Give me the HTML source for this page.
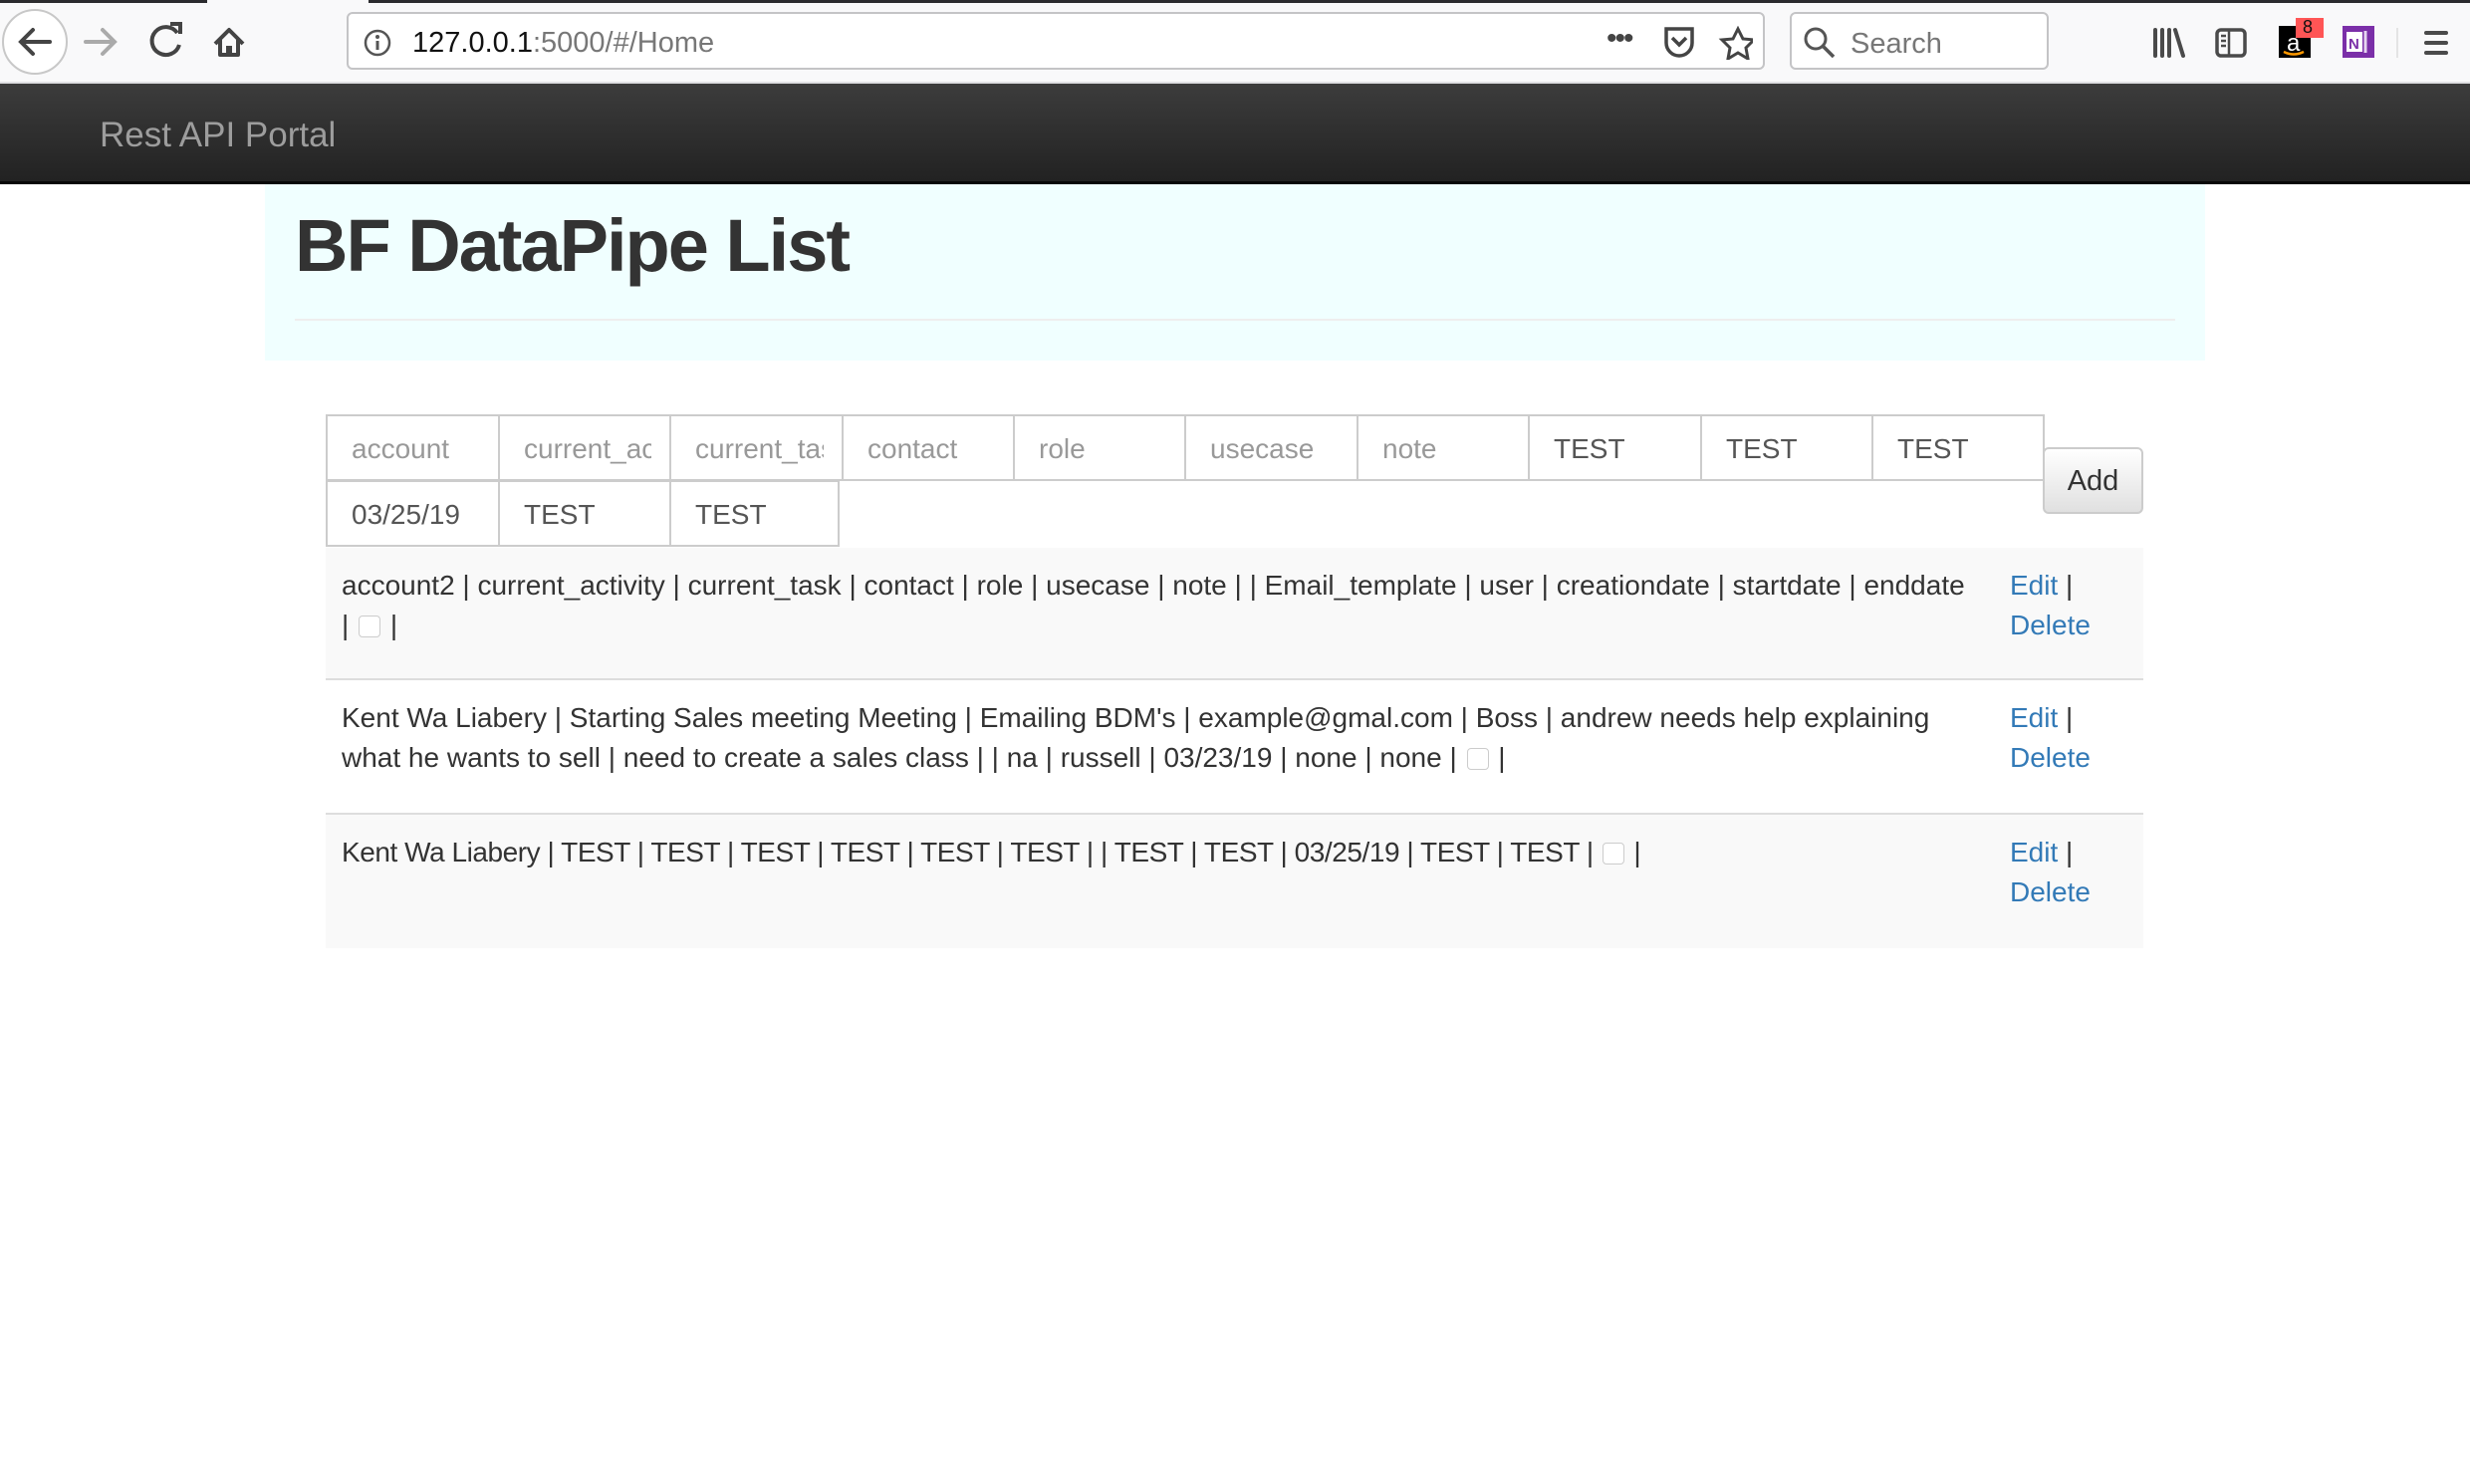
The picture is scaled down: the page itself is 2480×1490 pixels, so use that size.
<!DOCTYPE html>
<html><head><meta charset="utf-8"><style>
*{box-sizing:border-box;margin:0;padding:0}
body{width:2480px;height:1490px;background:#fff;font-family:"Liberation Sans",Arial,sans-serif;position:relative;overflow:hidden}
.abs{position:absolute}
#tb{left:0;top:0;width:2480px;height:84px;background:#f9f9fa;border-bottom:2px solid #e0e0e2}
#strip{left:0;top:0;width:2480px;height:3px;background:#2b2b2e}
#tab{left:208px;top:0;width:162px;height:3px;background:#f9f9fa}
#url{left:348px;top:12px;width:1424px;height:58px;border:2px solid #c4c4c6;border-radius:6px;background:#fff}
#srch{left:1797px;top:12px;width:260px;height:58px;border:2px solid #c4c4c6;border-radius:6px;background:#fff}
#nav{left:0;top:84px;width:2480px;height:101px;background:linear-gradient(#3c3c3c,#222);border-bottom:3px solid #080808}
#brand{left:100px;top:116px;font-size:35px;color:#9d9d9d}
#jumbo{left:266px;top:185px;width:1948px;height:177px;background:#f0ffff}
#title{left:296px;top:204px;font-size:74px;color:#333;font-weight:bold;letter-spacing:-2px}
#hr{left:296px;top:320px;width:1888px;height:2px;background:#eee}
.cell{position:absolute;height:67px;border:2px solid #ccc;background:#fff;font-size:28px;color:#999;padding-left:24px;padding-right:18px;line-height:66px;overflow:hidden;white-space:nowrap}
.cell span{display:block;overflow:hidden}
.cell.v{color:#555}
#add{left:2051px;top:449px;width:101px;height:67px;border:2px solid #ccc;border-radius:6px;background:linear-gradient(#fff,#e0e0e0);font-size:29px;color:#333;text-align:center;line-height:65px}
.row{position:absolute;left:327px;width:1825px;font-size:28px;color:#333;line-height:40px;padding:18px 16px 0 16px}
.row .t{width:1640px}
.row .a{position:absolute;left:1691px;top:18px;color:#337ab7}
.row .a span{color:#333}
.cb{display:inline-block;width:22px;height:22px;border:1px solid #ccc;border-radius:4px;vertical-align:-3px;background:#fff;margin:0 2px}
</style></head><body>
<div id="tb" class="abs"></div><div id="strip" class="abs"></div><div id="tab" class="abs"></div>
<svg class="abs" style="left:0;top:0" width="420" height="84">
<circle cx="35" cy="42" r="32" fill="#fff" stroke="#c8c8c8" stroke-width="2"/>
<path d="M50 42H22M33 30L21 42L33 54" stroke="#444" stroke-width="4" fill="none" stroke-linecap="round"/>
<path d="M86 42h28M103 30l12 12-12 12" stroke="#aaa" stroke-width="4" fill="none" stroke-linecap="round"/>
<path d="M178 33a14 14 0 1 0 2 12" stroke="#444" stroke-width="4" fill="none"/><path d="M171 24h10v10" stroke="#444" stroke-width="4" fill="none"/>
<path d="M216 44l14-14 14 14M221 40v15h18V40" stroke="#444" stroke-width="4" fill="none" stroke-linejoin="round"/><rect x="227" y="46" width="6" height="9" fill="#444"/>
</svg>
<div id="url" class="abs"></div>
<svg class="abs" style="left:364px;top:28px" width="30" height="30"><circle cx="15" cy="15" r="12" fill="none" stroke="#555" stroke-width="2.5"/><rect x="13.5" y="13" width="3" height="9" fill="#555"/><circle cx="15" cy="9" r="2" fill="#555"/></svg>
<div class="abs" style="left:414px;top:27px;font-size:29px;color:#111">127.0.0.1<span style="color:#777">:5000/#/Home</span></div>
<div class="abs" style="left:1613px;top:22px;font-size:30px;color:#444;letter-spacing:-2px">•••</div>
<svg class="abs" style="left:1670px;top:26px" width="90" height="34"><path d="M3 3h26v14a13 13 0 0 1-26 0z" fill="none" stroke="#444" stroke-width="3.5"/><path d="M9 12l7 7 7-7" fill="none" stroke="#444" stroke-width="3.5"/><path d="M75 3l5 10 11 1-8 8 2 11-10-6-10 6 2-11-8-8 11-1z" fill="none" stroke="#444" stroke-width="3"/></svg>
<div id="srch" class="abs"></div>
<svg class="abs" style="left:1810px;top:26px" width="34" height="34"><circle cx="13" cy="13" r="10" fill="none" stroke="#555" stroke-width="3"/><path d="M20 20l11 11" stroke="#555" stroke-width="3.5"/></svg>
<div class="abs" style="left:1858px;top:28px;font-size:29px;color:#777">Search</div>
<svg class="abs" style="left:2150px;top:18px" width="330" height="50">
<path d="M14 12v26M21 12v26M28 12v26M34 12l8 26" stroke="#4a4a4a" stroke-width="4" stroke-linecap="round"/>
<rect x="76" y="12" width="28" height="26" rx="4" fill="none" stroke="#4a4a4a" stroke-width="3.5"/><path d="M88 12v26M80 18h5M80 23h5M80 28h5" stroke="#4a4a4a" stroke-width="2.5"/>
<rect x="138" y="8" width="32" height="32" fill="#000"/><text x="146" y="33" font-size="24" fill="#fff" font-family="Liberation Sans">a</text><path d="M143 34q10 5 20 0" stroke="#f90" stroke-width="2.5" fill="none"/>
<rect x="155" y="-4" width="28" height="24" fill="#f55"/><text x="162" y="15" font-size="18" fill="#111" font-family="Liberation Sans">8</text>
<rect x="202" y="8" width="32" height="32" fill="#7b2fa8"/><rect x="206" y="14" width="16" height="20" fill="#fff"/><text x="208" y="31" font-size="15" fill="#7b2fa8" font-weight="bold" font-family="Liberation Sans">N</text>
<path d="M225 13v22" stroke="#e6d6f0" stroke-width="3"/>
<path d="M257 10v30" stroke="#ddd" stroke-width="1.5"/>
<path d="M286 15h20M286 25h20M286 35h20" stroke="#4a4a4a" stroke-width="4" stroke-linecap="round"/>
</svg>
<div id="nav" class="abs"></div>
<div id="brand" class="abs">Rest API Portal</div>
<div id="jumbo" class="abs"></div>
<div id="title" class="abs">BF DataPipe List</div>
<div id="hr" class="abs"></div>

<div class="cell" style="left:327px;top:416px;width:175px"><span>account</span></div>
<div class="cell" style="left:500px;top:416px;width:174px"><span>current_activity</span></div>
<div class="cell" style="left:672px;top:416px;width:175px"><span>current_task</span></div>
<div class="cell" style="left:845px;top:416px;width:174px"><span>contact</span></div>
<div class="cell" style="left:1017px;top:416px;width:174px"><span>role</span></div>
<div class="cell" style="left:1189px;top:416px;width:175px"><span>usecase</span></div>
<div class="cell" style="left:1362px;top:416px;width:174px"><span>note</span></div>
<div class="cell v" style="left:1534px;top:416px;width:175px"><span>TEST</span></div>
<div class="cell v" style="left:1707px;top:416px;width:174px"><span>TEST</span></div>
<div class="cell v" style="left:1879px;top:416px;width:174px"><span>TEST</span></div>
<div class="cell v" style="left:327px;top:482px;width:175px"><span>03/25/19</span></div>
<div class="cell v" style="left:500px;top:482px;width:174px"><span>TEST</span></div>
<div class="cell v" style="left:672px;top:482px;width:171px"><span>TEST</span></div>
<div id="add" class="abs">Add</div>

<div class="row" style="top:550px;height:133px;background:#f9f9f9;border-bottom:2px solid #ddd">
<div class="t">account2 | current_activity | current_task | contact | role | usecase | note | | Email_template | user | creationdate | startdate | enddate | <span class="cb"></span> |</div>
<div class="a">Edit <span>|</span><br>Delete</div></div>
<div class="row" style="top:683px;height:135px;background:#fff;border-bottom:2px solid #ddd">
<div class="t">Kent Wa Liabery | Starting Sales meeting Meeting | Emailing BDM's | example@gmal.com | Boss | andrew needs help explaining what he wants to sell | need to create a sales class | | na | russell | 03/23/19 | none | none | <span class="cb"></span> |</div>
<div class="a">Edit <span>|</span><br>Delete</div></div>
<div class="row" style="top:818px;height:134px;background:#f9f9f9">
<div class="t" style="letter-spacing:-0.45px">Kent Wa Liabery | TEST | TEST | TEST | TEST | TEST | TEST | | TEST | TEST | 03/25/19 | TEST | TEST | <span class="cb"></span> |</div>
<div class="a">Edit <span>|</span><br>Delete</div></div>
</body></html>
